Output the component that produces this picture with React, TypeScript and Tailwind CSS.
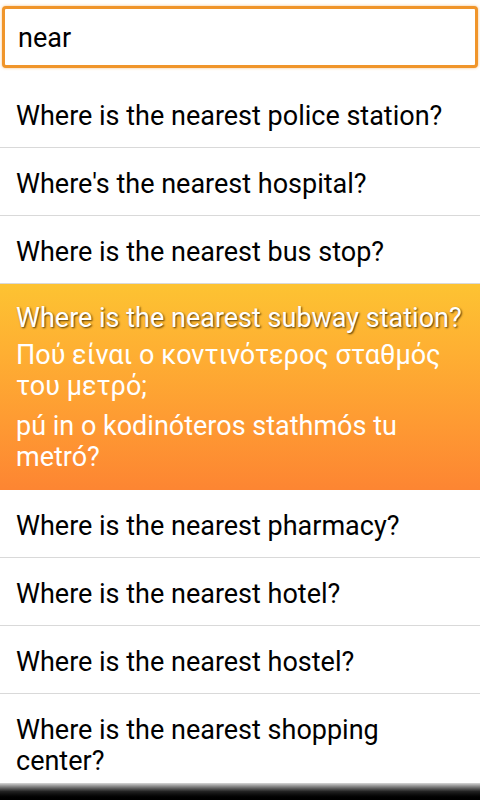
const rows = [
  "Where is the nearest police station?",
  "Where's the nearest hospital?",
  "Where is the nearest bus stop?",
];

const rowsAfter = [
  "Where is the nearest pharmacy?",
  "Where is the nearest hotel?",
  "Where is the nearest hostel?",
  "Where is the nearest shopping center?",
];

function Row({ text, last }: { text: string; last?: boolean }) {
  return (
    <div
      className={
        "px-4 pt-[21px] pb-[15px] text-[27px] leading-[31px] text-black" +
        (last ? "" : " border-b border-[#d9d9d9]")
      }
    >
      {text}
    </div>
  );
}

export default function App() {
  return (
    <div
      className="relative flex h-[800px] w-[480px] flex-col overflow-hidden bg-white"
      style={{ fontFamily: "Roboto, 'Noto Sans', sans-serif" }}
    >
      <div className="px-[2px] pt-[6px] pb-[12px]">
        <div className="flex h-[62px] items-center rounded-[4px] border-[3px] border-[#f0952a] bg-white px-[13px] pt-[2px] text-[27px] text-black shadow-[0_0_3px_rgba(240,149,42,0.6)]">
          near
        </div>
      </div>
      <div className="flex flex-col">
        {rows.map((r) => (
          <Row key={r} text={r} />
        ))}
        <div className="bg-gradient-to-b from-[#fdc332] to-[#fd8532] px-4 pt-[19px] pb-[17px] text-[27px] leading-[31px] text-white">
          <div className="[text-shadow:1px_1px_2px_rgba(60,40,0,0.9)]">
            Where is the nearest subway station?
          </div>
          <div className="mt-[6px]">Πού είναι ο κοντινότερος σταθμός του μετρό;</div>
          <div className="mt-[9px]">pú in o kodinóteros stathmós tu metró?</div>
        </div>
        {rowsAfter.map((r, i) => (
          <Row key={r} text={r} last={i === rowsAfter.length - 1} />
        ))}
      </div>
      <div className="absolute bottom-0 left-0 h-[17px] w-full bg-gradient-to-b from-[#d8d8d8] via-[#222] to-black" />
    </div>
  );
}
